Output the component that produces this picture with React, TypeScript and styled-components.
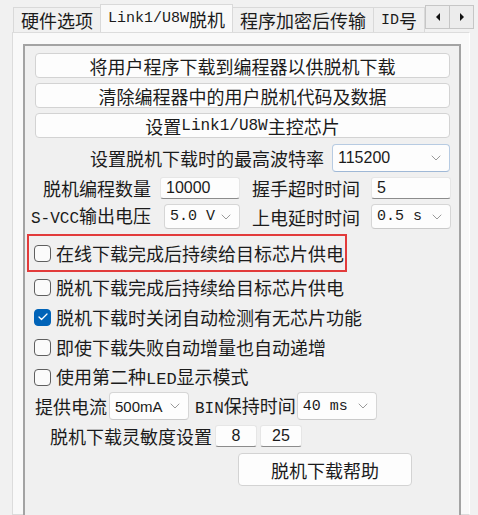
import React from 'react'
import styled, { createGlobalStyle } from 'styled-components'
import { ChevronDown, Check } from 'lucide-react'

const GlobalStyle = createGlobalStyle`
  html, body {
    margin: 0;
    padding: 0;
    background: #f1f1f1;
  }
  body {
    font-family: "Noto Sans CJK SC", "Liberation Sans", sans-serif;
    color: #1b1b1b;
  }
`

const Page = styled.div`
  width: 478px;
  height: 515px;
  overflow: hidden;
  display: flex;
  flex-direction: column;
  padding-left: 12px;
  box-sizing: border-box;
`

const TabStrip = styled.div`
  display: flex;
  align-items: flex-end;
  height: 32px;
  flex-shrink: 0;
`

const TabList = styled.div`
  display: flex;
  align-items: flex-end;
  width: 412px;
  overflow: hidden;
  padding-left: 1px;
  height: 32px;
`

const Tab = styled.div<{ $active?: boolean }>`
  flex-shrink: 0;
  box-sizing: border-box;
  height: ${p => (p.$active ? 29 : 25)}px;
  padding: 0 7px;
  display: flex;
  align-items: center;
  font-size: 18px;
  line-height: 1;
  white-space: nowrap;
  background: ${p => (p.$active ? '#f9f9f9' : '#f0f0f0')};
  border: 1px solid #d9d9d9;
  border-bottom: ${p => (p.$active ? '1px solid #f9f9f9' : 'none')};
  margin-bottom: ${p => (p.$active ? -1 : 0)}px;
  position: relative;
  z-index: ${p => (p.$active ? 1 : 0)};
  & + & {
    margin-left: -1px;
  }
`

const Mono = styled.span<{ $size?: number }>`
  font-family: "Liberation Mono", "DejaVu Sans Mono", monospace;
  font-size: ${p => p.$size ?? 16}px;
`

const Arrows = styled.div`
  display: flex;
  align-self: flex-start;
  margin-top: 5px;
  border: 1px solid #c6c6c6;
  background: #ececec;
`

const ArrowBtn = styled.div<{ $dir: 'l' | 'r' }>`
  width: 23px;
  height: 22px;
  display: flex;
  align-items: center;
  justify-content: center;
  & + & {
    border-left: 1px solid #c6c6c6;
  }
  &::before {
    content: '';
    border-top: 4px solid transparent;
    border-bottom: 4px solid transparent;
    ${p => (p.$dir === 'l' ? 'border-right: 4px solid #111;' : 'border-left: 4px solid #111;')}
  }
`

const Panel = styled.div`
  flex: 1;
  width: 458px;
  box-sizing: border-box;
  background: #f9f9f9;
  border: 1px solid #dcdcdc;
  border-right-color: #ffffff;
  padding: 11px 8px 0 10px;
  display: flex;
  flex-direction: column;
`

const GroupBox = styled.div`
  flex: 1;
  margin-bottom: -20px;
  border: 2px solid #a3a3a3;
  background: #f0f0f0;
  padding: 7px 9px 0 0;
  display: flex;
  flex-direction: column;
`

const WideButton = styled.div`
  height: 25px;
  margin: 0 0 5px 10px;
  box-sizing: border-box;
  background: #fdfdfd;
  border: 1px solid #d3d3d3;
  border-radius: 4px;
  display: flex;
  align-items: center;
  justify-content: center;
  font-size: 18px;
  line-height: 1;
`

const BaudRow = styled.div`
  display: flex;
  align-items: center;
  justify-content: flex-end;
  height: 28px;
  margin-top: 1px;
  font-size: 18px;
`

const Label = styled.span`
  font-size: 18px;
  line-height: 1;
  white-space: nowrap;
`

const SelectBox = styled.div<{ $w: number; $focus?: boolean; $h?: number }>`
  width: ${p => p.$w}px;
  height: ${p => p.$h ?? 28}px;
  box-sizing: border-box;
  background: #fdfdfd;
  border: 1px solid ${p => (p.$focus ? '#b7cbe2' : '#d6d6d6')};
  border-bottom-color: ${p => (p.$focus ? '#9fb8d6' : '#cacaca')};
  border-radius: 4px;
  display: flex;
  align-items: center;
  justify-content: space-between;
  padding: 0 5px 0 5px;
  flex-shrink: 0;
  color: #1b1b1b;
  white-space: nowrap;
  svg {
    color: #8a8a8a;
    flex-shrink: 0;
  }
`

const NumText = styled.span`
  font-family: "Liberation Sans", "Noto Sans", sans-serif;
  font-size: 16px;
`

const Field = styled.div<{ $w: number; $center?: boolean }>`
  width: ${p => p.$w}px;
  height: 22px;
  box-sizing: border-box;
  background: #fdfdfd;
  border: 1px solid #e6e6e6;
  border-bottom: 1px solid #8c8c8c;
  border-radius: 3px;
  display: flex;
  align-items: center;
  justify-content: ${p => (p.$center ? 'center' : 'flex-start')};
  padding: 0 5px;
  flex-shrink: 0;
`

const ParamGrid = styled.div<{ $h: number }>`
  display: grid;
  grid-template-columns: 129px 80px 119px 80px;
  column-gap: 6px;
  height: ${p => p.$h}px;
  margin-top: 5px;
  align-items: center;
  & > ${Label} {
    justify-self: end;
    padding-right: 3px;
  }
  & > ${Label}:nth-of-type(2) {
    padding-right: 5px;
  }
`

const Highlight = styled.div`
  align-self: flex-start;
  margin: 5px 0 0 2px;
  width: 320px;
  height: 38px;
  box-sizing: border-box;
  border: 2px solid #e23b3b;
  display: flex;
  align-items: center;
  padding-left: 5px;
`

const CheckRow = styled.div`
  display: flex;
  align-items: center;
  height: 30px;
  padding-left: 9px;
`

const Box = styled.span<{ $checked?: boolean }>`
  width: 17px;
  height: 17px;
  box-sizing: border-box;
  border-radius: 4px;
  border: 1px solid ${p => (p.$checked ? '#0063b8' : '#5f5f5f')};
  background: ${p => (p.$checked ? '#0063b8' : '#fbfbfb')};
  display: flex;
  align-items: center;
  justify-content: center;
  margin-right: 5px;
  flex-shrink: 0;
  svg {
    color: #fff;
  }
`

const InlineRow = styled.div<{ $h: number; $pl: number; $mt?: number }>`
  display: flex;
  align-items: center;
  height: ${p => p.$h}px;
  padding-left: ${p => p.$pl}px;
  margin-top: ${p => p.$mt ?? 0}px;
`

const HelpButton = styled(WideButton)`
  width: 174px;
  height: 33px;
  margin: 6px 0 0 213px;
`

function Select({ w, h, focus, children }: { w: number; h?: number; focus?: boolean; children: React.ReactNode }) {
  return (
    <SelectBox $w={w} $h={h} $focus={focus}>
      {children}
      <ChevronDown size={16} strokeWidth={1.3} />
    </SelectBox>
  )
}

function CheckItem({ checked, children }: { checked?: boolean; children: React.ReactNode }) {
  return (
    <>
      <Box $checked={checked}>{checked && <Check size={12} strokeWidth={2.5} />}</Box>
      <Label>{children}</Label>
    </>
  )
}

export default function App() {
  return (
    <Page>
      <GlobalStyle />
      <TabStrip>
        <TabList>
          <Tab>硬件选项</Tab>
          <Tab $active>
            <Mono $size={15}>Link1/U8W</Mono>脱机
          </Tab>
          <Tab>程序加密后传输</Tab>
          <Tab>
            <Mono $size={15}>ID</Mono>号
          </Tab>
        </TabList>
        <Arrows>
          <ArrowBtn $dir="l" />
          <ArrowBtn $dir="r" />
        </Arrows>
      </TabStrip>

      <Panel>
        <GroupBox>
          <WideButton>将用户程序下载到编程器以供脱机下载</WideButton>
          <WideButton>清除编程器中的用户脱机代码及数据</WideButton>
          <WideButton>
            设置<Mono>Link1/U8W</Mono>主控芯片
          </WideButton>

          <BaudRow>
            <Label style={{ marginRight: 8 }}>设置脱机下载时的最高波特率</Label>
            <Select w={118} focus>
              <NumText>115200</NumText>
            </Select>
          </BaudRow>

          <ParamGrid $h={22}>
            <Label>脱机编程数量</Label>
            <Field $w={80}>
              <NumText>10000</NumText>
            </Field>
            <Label>握手超时时间</Label>
            <Field $w={80}>
              <NumText>5</NumText>
            </Field>
          </ParamGrid>

          <ParamGrid $h={25}>
            <Label>
              <Mono>S-VCC</Mono>输出电压
            </Label>
            <div style={{ justifySelf: 'end' }}>
              <Select w={76} h={25}>
                <Mono $size={15}>5.0 V</Mono>
              </Select>
            </div>
            <Label>上电延时时间</Label>
            <Select w={80} h={25}>
              <Mono $size={15}>0.5 s</Mono>
            </Select>
          </ParamGrid>

          <Highlight>
            <CheckItem>在线下载完成后持续给目标芯片供电</CheckItem>
          </Highlight>
          <CheckRow>
            <CheckItem>脱机下载完成后持续给目标芯片供电</CheckItem>
          </CheckRow>
          <CheckRow>
            <CheckItem checked>脱机下载时关闭自动检测有无芯片功能</CheckItem>
          </CheckRow>
          <CheckRow>
            <CheckItem>即使下载失败自动增量也自动递增</CheckItem>
          </CheckRow>
          <CheckRow>
            <CheckItem>
              使用第二种<Mono $size={17}>LED</Mono>显示模式
            </CheckItem>
          </CheckRow>

          <InlineRow $h={28} $pl={10}>
            <Label style={{ marginRight: 2 }}>提供电流</Label>
            <Select w={80}>
              <NumText style={{ fontSize: 15 }}>500mA</NumText>
            </Select>
            <Label style={{ margin: '0 1px 0 6px' }}>
              <Mono>BIN</Mono>保持时间
            </Label>
            <Select w={80}>
              <Mono $size={15}>40 ms</Mono>
            </Select>
          </InlineRow>

          <InlineRow $h={22} $pl={25} $mt={5}>
            <Label style={{ marginRight: 3 }}>脱机下载灵敏度设置</Label>
            <Field $w={42} $center>
              <NumText>8</NumText>
            </Field>
            <Field $w={42} $center style={{ marginLeft: 3 }}>
              <NumText>25</NumText>
            </Field>
          </InlineRow>

          <HelpButton>脱机下载帮助</HelpButton>
        </GroupBox>
      </Panel>
    </Page>
  )
}
